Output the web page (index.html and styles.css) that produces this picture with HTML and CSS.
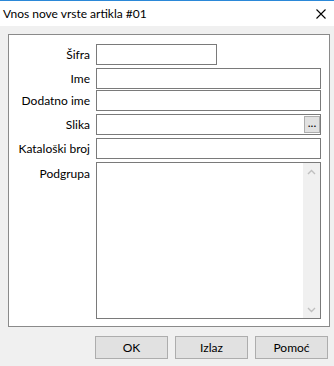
FILE: index.html
```html
<!DOCTYPE html>
<html>
<head>
<meta charset="utf-8">
<link rel="stylesheet" href="styles.css">
</head>
<body>
<div class="window">
  <div class="titlebar">
    <span class="title">Vnos nove vrste artikla #01</span>
    <svg class="close" width="10" height="10" viewBox="0 0 10 10"><path d="M0.5 0.5L9.5 9.5M9.5 0.5L0.5 9.5" stroke="#000" stroke-width="1.1" fill="none"/></svg>
  </div>
  <div class="content">
    <div class="panel">
      <div class="row">
        <span class="lbl">Šifra</span>
        <div class="field field-short"></div>
      </div>
      <div class="row">
        <span class="lbl">Ime</span>
        <div class="field"></div>
      </div>
      <div class="row row-tight">
        <span class="lbl">Dodatno ime</span>
        <div class="field"></div>
      </div>
      <div class="row">
        <span class="lbl">Slika</span>
        <div class="field field-browse"><span class="browse">...</span></div>
      </div>
      <div class="row">
        <span class="lbl">Kataloški broj</span>
        <div class="field"></div>
      </div>
      <div class="row row-area">
        <span class="lbl">Podgrupa</span>
        <div class="field field-area">
          <div class="area-text"></div>
          <div class="vscroll">
            <div class="sbtn"><svg width="9" height="6" viewBox="0 0 9 6"><path d="M1 5L4.5 1.5L8 5" stroke="#bfbfbf" stroke-width="1.4" fill="none"/></svg></div>
            <div class="strack"></div>
            <div class="sbtn"><svg width="9" height="6" viewBox="0 0 9 6"><path d="M1 1L4.5 4.5L8 1" stroke="#bfbfbf" stroke-width="1.4" fill="none"/></svg></div>
          </div>
        </div>
      </div>
    </div>
    <div class="buttons">
      <button class="btn">OK</button>
      <button class="btn">Izlaz</button>
      <button class="btn">Pomoć</button>
    </div>
  </div>
</div>
</body>
</html>
```
FILE: styles.css
```css
html, body {
  margin: 0;
  padding: 0;
}
body {
  width: 334px;
  height: 366px;
  background: #f0f0f0;
  font-family: Lato, "Noto Sans", sans-serif;
  font-size: 12px;
  line-height: 15px;
  color: #000;
  overflow: hidden;
}
.window {
  border-top: 1px solid #2b88d8;
}
.titlebar {
  height: 25px;
  background: #fff;
  display: flex;
  align-items: center;
  justify-content: space-between;
  padding: 0 8px 0 3px;
}
.title {
  white-space: nowrap;
}
.close {
  display: block;
}
.content {
  padding-top: 8px;
}
.panel {
  margin: 0 4px 0 8px;
  border: 1px solid #8a8a8a;
  background: #fff;
  padding: 9px 8px 7px 0;
  box-sizing: border-box;
  height: 293px;
  display: flex;
  flex-direction: column;
}
.row {
  display: flex;
  align-items: center;
  height: 21px;
  margin-top: 3px;
}
.row:first-child {
  margin-top: 0;
}
.row-tight {
  margin-top: 1px;
}
.lbl {
  width: 81px;
  margin-right: 6px;
  text-align: right;
  white-space: nowrap;
}
.field {
  flex: 1;
  height: 21px;
  box-sizing: border-box;
  border: 1px solid #7a7a7a;
  background: #fff;
}
.field-short {
  flex: none;
  width: 121px;
}
.field-browse {
  display: flex;
  justify-content: flex-end;
  align-items: center;
}
.browse {
  width: 16px;
  height: 17px;
  box-sizing: border-box;
  border: 1px solid #adadad;
  background: #e1e1e1;
  font-size: 12px;
  line-height: 12px;
  text-align: center;
  letter-spacing: 0;
}
.row-area {
  align-items: flex-start;
  height: 157px;
}
.row-area .lbl {
  padding-top: 4px;
}
.field-area {
  height: 157px;
  display: flex;
}
.area-text {
  flex: 1;
}
.vscroll {
  width: 17px;
  background: #f0f0f0;
  display: flex;
  flex-direction: column;
}
.sbtn {
  height: 17px;
  display: flex;
  align-items: center;
  justify-content: center;
}
.sbtn svg {
  display: block;
}
.strack {
  flex: 1;
}
.buttons {
  display: flex;
  justify-content: flex-end;
  gap: 7px;
  margin-top: 9px;
  padding-right: 6px;
}
.btn {
  width: 73px;
  height: 23px;
  box-sizing: border-box;
  border: 1px solid #adadad;
  background: #e1e1e1;
  font-family: Lato, "Noto Sans", sans-serif;
  font-size: 12px;
  font-weight: 400;
  color: #000;
  padding: 0;
  margin: 0;
  border-radius: 0;
}
```
